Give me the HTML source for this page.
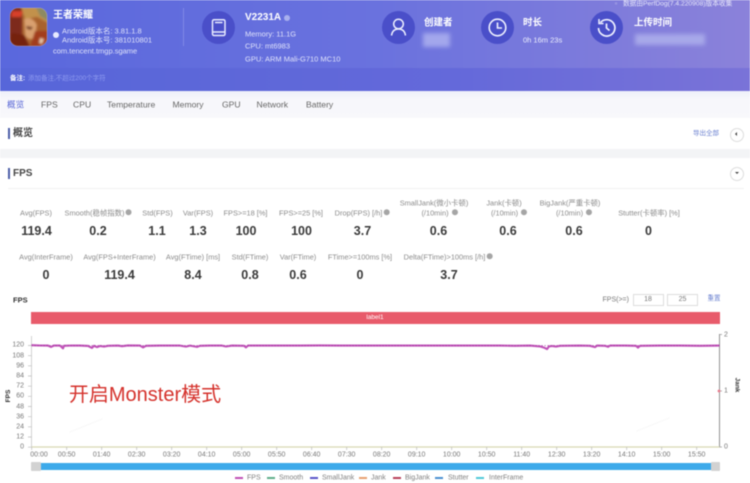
<!DOCTYPE html>
<html lang="zh"><head><meta charset="utf-8"><title>PerfDog</title>
<style>
html,body{margin:0;padding:0;background:#fff}
#p{position:relative;width:750px;height:483px;overflow:hidden;background:#fff;font-family:"Liberation Sans","Noto Sans CJK SC",sans-serif;filter:blur(.45px)}
.b{position:absolute}
.t{position:absolute;white-space:nowrap;line-height:1;transform:translate(0,-50%)}
.c{transform:translate(-50%,-50%)}
.w{color:#fff}
.h{color:#dfe2fb;font-size:7.5px}
.l{color:#8b8b8b;font-size:7.4px}
.v{color:#3a3a3a;font-size:12.5px;font-weight:bold}
.tab{color:#666;font-size:8.6px;top:104.5px}
.ax{color:#777;font-size:7px}
.lg{color:#808080;font-size:7px;top:477.5px}
.sw{position:absolute;top:476.5px;height:2px;width:8px}
.ic{position:absolute;width:33px;height:33px;border-radius:50%;background:#4a4fc9;top:10.5px}
.q{display:inline-block;width:6px;height:6px;border-radius:50%;background:#a5a5a5;vertical-align:-.5px;margin-left:1px}
.inp{position:absolute;top:293.5px;height:10px;border:1px solid #ddd;background:#fff;color:#777;font-size:7px;line-height:10px;text-align:center}
</style></head><body><div id="p">

<div class="b" style="left:0;top:0;width:750px;height:68px;background:linear-gradient(90deg,#5a68dd 0%,#6a72de 50%,#8b82da 100%)"></div>
<div class="b" style="left:0;top:68px;width:750px;height:22.5px;background:linear-gradient(90deg,#5766d9 0%,#6469da 60%,#7a73d8 100%)"></div>
<div class="b" style="left:0;top:90.5px;width:750px;height:27px;background:linear-gradient(180deg,#eef0fa 0,#f7f7fb 30%,#f8f8fb 100%)"></div>

<svg class="b" style="left:9px;top:7px" width="39" height="40" viewBox="0 0 39 40">
<defs><clipPath id="ai"><rect x="1" y="1" width="37" height="38" rx="8"/></clipPath>
<filter id="bl"><feGaussianBlur stdDeviation="1"/></filter></defs>
<g clip-path="url(#ai)"><rect width="39" height="40" fill="#a8622e"/>
<g filter="url(#bl)">
<rect x="0" y="0" width="13" height="40" fill="#7d2a1a"/>
<path d="M12 0H39V16L28 10 16 12Z" fill="#c2914c"/>
<path d="M27 0H39V14L31 9Z" fill="#8d8a62"/>
<path d="M15 12Q24 9 28 18L26 30Q20 35 16 28Z" fill="#d9a070"/>
<path d="M3 26L15 28 21 40H0Z" fill="#74200f"/>
<path d="M26 24H39V40H21Z" fill="#a23c1c"/>
<path d="M31 31L35 32 33 37 30 36Z" fill="#e8c8a8"/>
<path d="M3 4H14L12 10H2Z" fill="#d8402c"/>
<path d="M17 19L24 20 22 23 18 22Z" fill="#7a4326"/>
</g></g>
<rect x="1" y="1" width="37" height="38" rx="8" fill="none" stroke="#ffffff" stroke-opacity=".2"/>
</svg>

<div class="t w" style="left:53px;top:15.5px;font-size:10px;font-weight:bold">王者荣耀</div>
<div class="b" style="left:53px;top:32px;width:6px;height:6px;border-radius:50%;background:#e6e9ff"></div>
<div class="t h" style="left:62px;top:30.5px">Android版本名: 3.81.1.8</div>
<div class="t h" style="left:62px;top:39.5px">Android版本号: 381010801</div>
<div class="t h" style="left:53px;top:51px">com.tencent.tmgp.sgame</div>
<div class="b" style="left:183px;top:8px;width:1px;height:38px;background:#7f89e6"></div>

<div class="ic" style="left:202px"><svg width="33" height="33" viewBox="0 0 33 33" fill="none" stroke="#e8ebff" stroke-width="1.5"><rect x="10.5" y="8.7" width="12.5" height="15.8" rx="1.5"/><path d="M10.5 21H23M13 11.5H20.5"/></svg></div>
<div class="t w" style="left:245px;top:18px;font-size:10px;font-weight:bold">V2231A</div>
<div class="b" style="left:284px;top:15px;width:6px;height:6px;border-radius:50%;background:#a9b0ee"></div>
<div class="t h" style="left:245px;top:33.5px">Memory: 11.1G</div>
<div class="t h" style="left:245px;top:46px">CPU: mt6983</div>
<div class="t h" style="left:245px;top:58.5px">GPU: ARM Mali-G710 MC10</div>

<div class="ic" style="left:381.5px"><svg width="33" height="33" viewBox="0 0 33 33" fill="none" stroke="#eef0ff" stroke-width="1.5"><circle cx="16.5" cy="13" r="4.8"/><path d="M9.5 24.5Q10.5 18 16.5 18T23.5 24.5"/></svg></div>
<div class="t w" style="left:424px;top:23px;font-size:9.5px;font-weight:bold">创建者</div>
<div class="b" style="left:423px;top:33px;width:27px;height:14px;background:#a3a7ec;filter:blur(2px)"></div>

<div class="ic" style="left:480.5px"><svg width="33" height="33" viewBox="0 0 33 33" fill="none" stroke="#eef0ff" stroke-width="1.6"><circle cx="16.5" cy="16.5" r="8.3"/><path d="M16.5 11.5V17H21"/></svg></div>
<div class="t w" style="left:523px;top:23px;font-size:9.5px;font-weight:bold">时长</div>
<div class="t h" style="left:523px;top:40px;color:#eef0ff">0h 16m 23s</div>

<div class="ic" style="left:590px"><svg width="33" height="33" viewBox="0 0 33 33" fill="none" stroke="#eef0ff" stroke-width="1.7"><path d="M10.5 11.5A8.2 8.2 0 1 1 8.5 17"/><path d="M9 8V12.5H13.5" stroke-width="1.5"/><path d="M16.5 12.5V17L19.5 19.5"/></svg></div>
<div class="t w" style="left:634px;top:23px;font-size:9.5px;font-weight:bold">上传时间</div>
<div class="b" style="left:635px;top:34px;width:70px;height:11px;background:#a7a8e9;filter:blur(2px)"></div>

<div class="t" style="left:615px;top:5px;font-size:6.8px;color:#c9c6f0">▫</div>
<div class="t" style="left:623px;top:5px;font-size:6.7px;color:#e6e6fa">数据由PerfDog(7.4.220908)版本收集</div>

<div class="t w" style="left:10px;top:78.5px;font-size:6.5px;font-weight:bold">备注:</div>
<div class="t" style="left:28px;top:78.5px;font-size:6.5px;color:#8f9bf0">添加备注,不超过200个字符</div>

<div class="t tab" style="left:7px;color:#5866d6">概览</div>
<div class="t tab" style="left:41px">FPS</div>
<div class="t tab" style="left:73px">CPU</div>
<div class="t tab" style="left:107px">Temperature</div>
<div class="t tab" style="left:172.5px">Memory</div>
<div class="t tab" style="left:222px">GPU</div>
<div class="t tab" style="left:256.5px">Network</div>
<div class="t tab" style="left:306px">Battery</div>

<div class="b" style="left:0;top:148.5px;width:750px;height:9px;background:#f3f4f6"></div>
<div class="b" style="left:8px;top:128px;width:1.5px;height:11px;background:#4c5fa8"></div>
<div class="t" style="left:13px;top:134px;font-size:10px;font-weight:bold;color:#444">概览</div>
<div class="t" style="left:693px;top:133.5px;font-size:6.5px;color:#6a80d0">导出全部</div>
<div class="b" style="left:730px;top:127.5px;width:12px;height:12px;border:1px solid #ddd;border-radius:50%"></div>
<div class="b" style="left:735px;top:131.8px;border:2px solid transparent;border-right:2.5px solid #444;border-left:0"></div>

<div class="b" style="left:8px;top:168px;width:1.5px;height:11px;background:#4c5fa8"></div>
<div class="t" style="left:13px;top:173.5px;font-size:10px;font-weight:bold;color:#444">FPS</div>
<div class="b" style="left:730px;top:166.5px;width:12px;height:12px;border:1px solid #ddd;border-radius:50%"></div>
<div class="b" style="left:734.5px;top:172px;border:2px solid transparent;border-top:2.5px solid #444;border-bottom:0"></div>
<div class="b" style="left:8px;top:188px;width:736px;height:1px;background:#f2f2f2"></div>

<div class="t l c" style="left:36px;top:212.5px">Avg(FPS)</div>
<div class="t l c" style="left:98px;top:212.5px">Smooth(稳帧指数)<span class="q"></span></div>
<div class="t l c" style="left:157.5px;top:212.5px">Std(FPS)</div>
<div class="t l c" style="left:198px;top:212.5px">Var(FPS)</div>
<div class="t l c" style="left:245.5px;top:212.5px">FPS&gt;=18 [%]</div>
<div class="t l c" style="left:301px;top:212.5px">FPS&gt;=25 [%]</div>
<div class="t l c" style="left:362px;top:212.5px">Drop(FPS) [/h]<span class="q"></span></div>
<div class="t l c" style="left:434px;top:203px">SmallJank(微小卡顿)</div>
<div class="t l c" style="left:439.5px;top:212.5px">(/10min)<span class="q" style="margin-left:3px"></span></div>
<div class="t l c" style="left:504px;top:203px">Jank(卡顿)</div>
<div class="t l c" style="left:509px;top:212.5px">(/10min)<span class="q" style="margin-left:3px"></span></div>
<div class="t l c" style="left:570px;top:203px">BigJank(严重卡顿)</div>
<div class="t l c" style="left:574px;top:212.5px">(/10min)<span class="q" style="margin-left:3px"></span></div>
<div class="t l c" style="left:649px;top:212.5px">Stutter(卡顿率) [%]</div>

<div class="t v c" style="left:36.5px;top:231px">119.4</div>
<div class="t v c" style="left:98px;top:231px">0.2</div>
<div class="t v c" style="left:157px;top:231px">1.1</div>
<div class="t v c" style="left:198px;top:231px">1.3</div>
<div class="t v c" style="left:246px;top:231px">100</div>
<div class="t v c" style="left:301.5px;top:231px">100</div>
<div class="t v c" style="left:362.5px;top:231px">3.7</div>
<div class="t v c" style="left:438.5px;top:231px">0.6</div>
<div class="t v c" style="left:508px;top:231px">0.6</div>
<div class="t v c" style="left:574px;top:231px">0.6</div>
<div class="t v c" style="left:648.5px;top:231px">0</div>

<div class="t l c" style="left:46px;top:256.5px">Avg(InterFrame)</div>
<div class="t l c" style="left:119.5px;top:256.5px">Avg(FPS+InterFrame)</div>
<div class="t l c" style="left:193px;top:256.5px">Avg(FTime) [ms]</div>
<div class="t l c" style="left:250px;top:256.5px">Std(FTime)</div>
<div class="t l c" style="left:298px;top:256.5px">Var(FTime)</div>
<div class="t l c" style="left:360px;top:256.5px">FTime&gt;=100ms [%]</div>
<div class="t l c" style="left:448px;top:256.5px">Delta(FTime)&gt;100ms [/h]<span class="q"></span></div>

<div class="t v c" style="left:46px;top:275px">0</div>
<div class="t v c" style="left:119.5px;top:275px">119.4</div>
<div class="t v c" style="left:193px;top:275px">8.4</div>
<div class="t v c" style="left:250px;top:275px">0.8</div>
<div class="t v c" style="left:298px;top:275px">0.6</div>
<div class="t v c" style="left:360px;top:275px">0</div>
<div class="t v c" style="left:449px;top:275px">3.7</div>

<div class="t" style="left:13px;top:300px;font-size:7.5px;font-weight:bold;color:#333">FPS</div>
<div class="t ax" style="left:602.5px;top:299.5px">FPS(&gt;=)</div>
<div class="inp" style="left:632.5px;width:29px">18</div>
<div class="inp" style="left:667px;width:29px">25</div>
<div class="t" style="left:707.5px;top:299px;font-size:6.5px;color:#6a80d0">重置</div>

<div class="b" style="left:31px;top:311.5px;width:689px;height:12.5px;background:#e85b6b"></div>
<div class="t c w" style="left:375px;top:317.5px;font-size:6.5px">label1</div>

<svg class="b" style="left:0;top:330px" width="750" height="125" viewBox="0 330 750 125" fill="none">
<path d="M31.5 336V447.5" stroke="#c8c8c8" stroke-width=".8"/>
<path d="M719.5 334V447.5" stroke="#888" stroke-width=".9"/>
<path d="M31.5 447H719.5" stroke="#d8d8b4" stroke-width="1.2"/>
<path d="M28 345.5H31.5M28 355.7H31.5M28 365.8H31.5M28 376H31.5M28 386.2H31.5M28 396.3H31.5M28 406.5H31.5M28 416.7H31.5M28 426.8H31.5M28 437H31.5M28 447.2H31.5" stroke="#bbb" stroke-width=".7"/>
<path d="M719.5 334.5H722M719.5 391H722M719.5 447H722" stroke="#999" stroke-width=".7"/>
<path d="M31.7 447V450M66.7 447V450M101.7 447V450M136.7 447V450M171.7 447V450M206.7 447V450M241.7 447V450M276.7 447V450M311.7 447V450M346.7 447V450M381.7 447V450M416.7 447V450M451.7 447V450M486.7 447V450M521.7 447V450M556.7 447V450M591.7 447V450M626.7 447V450M661.7 447V450M696.7 447V450" stroke="#bbb" stroke-width=".7"/>
<g transform="translate(0,-.4)">
<polyline stroke="#c052b8" stroke-width="2.1" stroke-linejoin="round" points="31.5,345.6 40,345.9 48,346 51,347.3 54,345.9 60,346 63,348.8 64,346.2 72,345.9 80,346 88,346.3 92,348.3 94,346.2 97,347.5 100,346.4 104,347 108,346.2 118,346 122,346.6 128,345.8 140,346 143,347.8 146,346.2 160,346 180,346 186,347 190,346 197,347.3 200,346.2 210,346 222,346 226,346.9 232,346 244,346.2 246,347.8 248,346 262,346 280,346 300,346 320,345.8 340,346 360,346 380,346 400,346 420,346 440,346 460,346 480,346 500,346 515,346.2 530,346 540,346.8 544,348 547,349.5 549,346.8 552,346.4 556,347 560,346.2 580,346 590,346.2 595,347.5 597,346 605,346.2 608,347.2 610,346 625,346 636,346.2 638,348 640,346.2 660,346 680,346 700,346.2 719.5,346"/>
<path d="M31.5 346H719.5" stroke="#9e3c9c" stroke-width=".8" stroke-dasharray="1.2 1.8"/>
</g>
<circle cx="719" cy="391" r="1.4" fill="#e87a8c"/>
</svg>
<div class="b" style="left:68px;top:425px;width:36px;height:1px;background:#f8f8f8;transform:rotate(-22deg)"></div>
<div class="b" style="left:635px;top:424px;width:36px;height:1px;background:#f8f8f8;transform:rotate(-22deg)"></div>

<div class="t ax" style="right:726px;top:345px">120</div>
<div class="t ax" style="right:726px;top:355.5px">108</div>
<div class="t ax" style="right:726px;top:365.6px">96</div>
<div class="t ax" style="right:726px;top:376px">84</div>
<div class="t ax" style="right:726px;top:386px">72</div>
<div class="t ax" style="right:726px;top:396.3px">60</div>
<div class="t ax" style="right:726px;top:406.5px">48</div>
<div class="t ax" style="right:726px;top:416.7px">36</div>
<div class="t ax" style="right:726px;top:427px">24</div>
<div class="t ax" style="right:726px;top:437px">12</div>
<div class="t ax" style="right:726px;top:447px">0</div>
<div class="t ax" style="left:724px;top:334.5px">2</div>
<div class="t ax" style="left:724px;top:391px">1</div>
<div class="t ax" style="left:724px;top:447px">0</div>
<div class="t c" style="left:9px;top:396px;font-size:6.5px;font-weight:bold;color:#333;transform:translate(-50%,-50%) rotate(-90deg)">FPS</div>
<div class="t c" style="left:735.5px;top:385px;font-size:6.5px;font-weight:bold;color:#333;transform:translate(-50%,-50%) rotate(90deg)">Jank</div>

<div class="t c" style="left:145px;top:395px;font-size:20px;color:#d5322c">开启Monster模式</div>

<div class="t ax c" style="left:39px;top:455px">00:00</div>
<div class="t ax c" style="left:66.7px;top:455px">00:50</div>
<div class="t ax c" style="left:101.7px;top:455px">01:40</div>
<div class="t ax c" style="left:136.7px;top:455px">02:30</div>
<div class="t ax c" style="left:171.7px;top:455px">03:20</div>
<div class="t ax c" style="left:206.7px;top:455px">04:10</div>
<div class="t ax c" style="left:241.7px;top:455px">05:00</div>
<div class="t ax c" style="left:276.7px;top:455px">05:50</div>
<div class="t ax c" style="left:311.7px;top:455px">06:40</div>
<div class="t ax c" style="left:346.7px;top:455px">07:30</div>
<div class="t ax c" style="left:381.7px;top:455px">08:20</div>
<div class="t ax c" style="left:416.7px;top:455px">09:10</div>
<div class="t ax c" style="left:451.7px;top:455px">10:00</div>
<div class="t ax c" style="left:486.7px;top:455px">10:50</div>
<div class="t ax c" style="left:521.7px;top:455px">11:40</div>
<div class="t ax c" style="left:556.7px;top:455px">12:30</div>
<div class="t ax c" style="left:591.7px;top:455px">13:20</div>
<div class="t ax c" style="left:626.7px;top:455px">14:10</div>
<div class="t ax c" style="left:661.7px;top:455px">15:00</div>
<div class="t ax c" style="left:696.7px;top:455px">15:50</div>

<div class="b" style="left:31px;top:462.5px;width:689px;height:7px;background:#3daaea"></div>
<div class="b" style="left:31px;top:461.5px;width:9.5px;height:9px;background:#d2d2d2;border-radius:1px"></div>
<div class="b" style="left:710.5px;top:461.5px;width:9.5px;height:9px;background:#d2d2d2;border-radius:1px"></div>

<div class="sw" style="left:235px;background:#c04fb4"></div><div class="t lg" style="left:247px">FPS</div>
<div class="sw" style="left:267px;background:#5fae8a"></div><div class="t lg" style="left:279px">Smooth</div>
<div class="sw" style="left:310px;background:#5a55c8"></div><div class="t lg" style="left:322px">SmallJank</div>
<div class="sw" style="left:359px;background:#e8a070"></div><div class="t lg" style="left:371px">Jank</div>
<div class="sw" style="left:393px;background:#b8405a"></div><div class="t lg" style="left:405px">BigJank</div>
<div class="sw" style="left:435px;background:#4a90d0"></div><div class="t lg" style="left:448px">Stutter</div>
<div class="sw" style="left:476px;background:#50c8d8"></div><div class="t lg" style="left:489px">InterFrame</div>

</div></body></html>
